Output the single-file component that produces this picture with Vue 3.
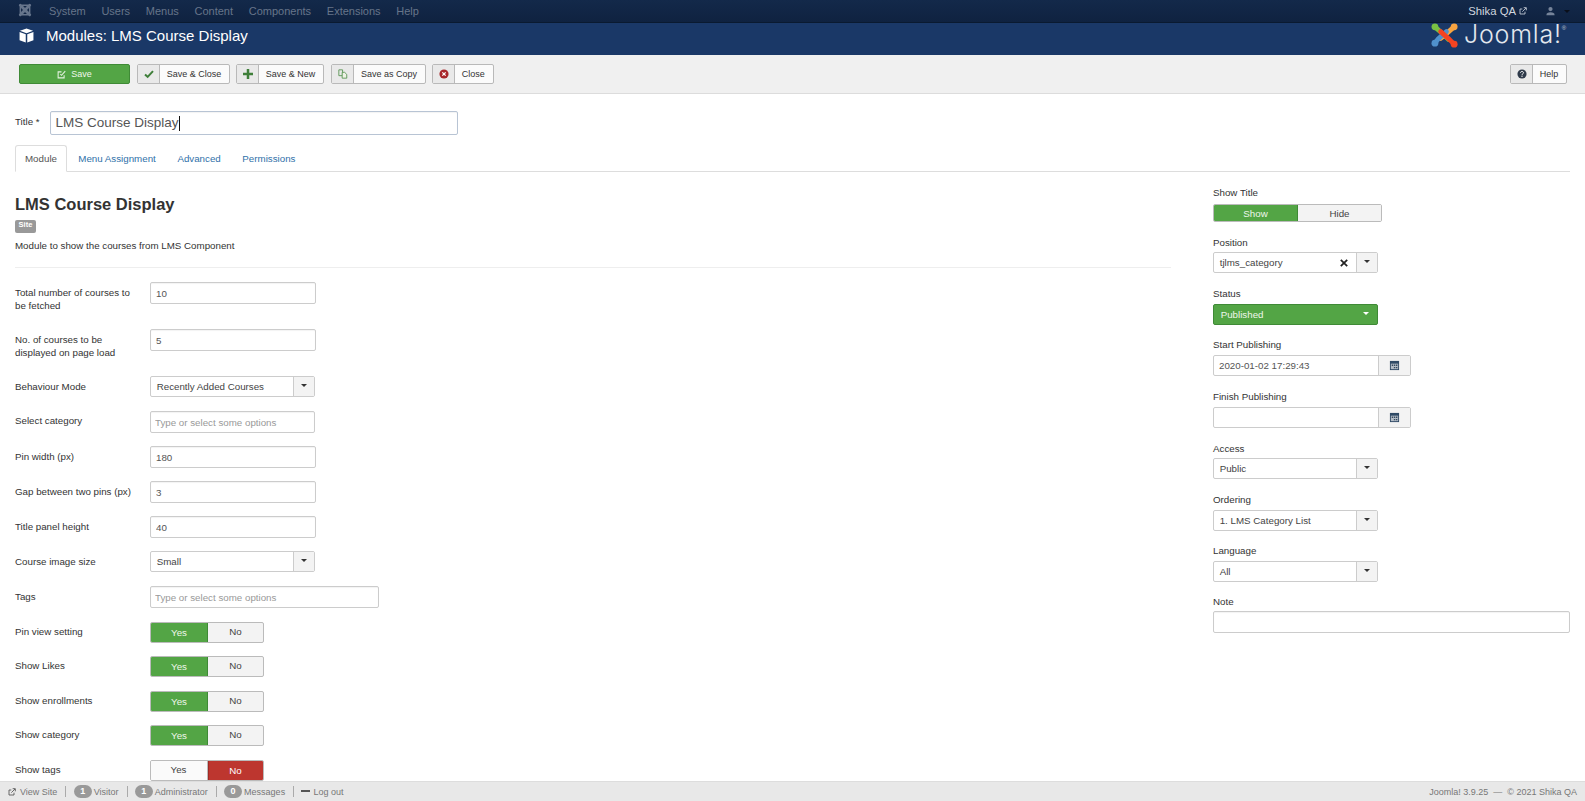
<script setup>
const navItems = ['System', 'Users', 'Menus', 'Content', 'Components', 'Extensions', 'Help']
const tabs = ['Module', 'Menu Assignment', 'Advanced', 'Permissions']
const toggles = [
  { label: 'Pin view setting', on: true },
  { label: 'Show Likes', on: true },
  { label: 'Show enrollments', on: true },
  { label: 'Show category', on: true },
  { label: 'Show tags', on: false }
]
</script>

<template>
  <div class="page">
    <nav class="nav">
      <svg class="nav-logo" viewBox="0 0 24 24" width="14" height="14" fill="none" stroke="#66758c" stroke-width="5" stroke-linecap="round">
        <path d="M4 4 20 20M20 4 4 20" />
        <path d="M7 4h10M7 20h10M4 7v10M20 7v10" stroke-width="2.500" />
      </svg>
      <ul class="nav-menu">
        <li v-for="item in navItems" :key="item">{{ item }}</li>
      </ul>
      <div class="nav-right">
        <span class="nav-site">Shika QA</span>
        <svg class="ext" viewBox="0 0 12 12" width="8" height="8" fill="none" stroke="#c5ccd8" stroke-width="1.300">
          <path d="M9 7v3.500H1.500V3H5M5 7l5.500-5.500M7 1h4v4" />
        </svg>
        <svg class="nav-user" viewBox="0 0 12 12" width="9" height="10" fill="#76849a">
          <circle cx="6" cy="3.400" r="2.800" />
          <path d="M0.500 11.500c0-3 2-4 5.500-4s5.500 1 5.500 4z" />
        </svg>
        <span class="nav-caret"></span>
      </div>
    </nav>

    <header class="head">
      <svg class="cube" viewBox="0 0 16 16" width="15" height="15" fill="#fff">
        <path d="M8 .6 15 3 8 5.500 1 3z" />
        <path d="M.6 4.200 7.200 6.600v8.800L.6 13z" />
        <path d="M15.400 4.200 8.800 6.600v8.800l6.600-2.400z" />
      </svg>
      <h1 class="head-title">Modules: LMS Course Display</h1>
      <div class="brand">
        <svg class="brand-mark" viewBox="0 0 30 26" width="29" height="25" fill="none" stroke-width="5" stroke-linecap="round" stroke-linejoin="round">
          <path d="M5 4 L14 12 L19 17" stroke="#7ac143" />
          <path d="M5 4 h0.100" stroke="#7ac143" stroke-width="7" />
          <path d="M25 4 L17 11 L11 16" stroke="#f9a541" />
          <path d="M25 4 h0.100" stroke="#f9a541" stroke-width="7" />
          <path d="M5 21 L8 17 L17 9" stroke="#5091cd" />
          <path d="M5 21 h0.100" stroke="#5091cd" stroke-width="7" />
          <path d="M25 22 L20 17 L11 9" stroke="#f44321" />
          <path d="M25 22 h0.100" stroke="#f44321" stroke-width="7" />
        </svg>
        <span class="brand-word">Joomla!</span>
        <span class="brand-reg">®</span>
      </div>
    </header>

    <div class="toolbar">
      <button class="tb-save">
        <svg viewBox="0 0 12 12" width="9" height="9" fill="none" stroke="#e6f2e2" stroke-width="1.400">
          <path d="M9.500 7v3.500h-8v-8H6" />
          <path d="M4.500 5.500 6 7l5-5.500" />
        </svg>
        <span>Save</span>
      </button>
      <button class="tb sc">
        <span class="tb-ic">
          <svg viewBox="0 0 12 12" width="10" height="10" fill="none" stroke="#3f7f3a" stroke-width="2.400"><path d="M1.200 6.500 4.400 9.400 10.800 2.600" /></svg>
        </span>
        <span class="tb-tx">Save &amp; Close</span>
      </button>
      <button class="tb sn">
        <span class="tb-ic">
          <svg viewBox="0 0 12 12" width="10" height="10" fill="#3f7f3a"><path d="M4.500 0h3v4.500H12v3H7.500V12h-3V7.500H0v-3h4.500z" /></svg>
        </span>
        <span class="tb-tx">Save &amp; New</span>
      </button>
      <button class="tb sc2">
        <span class="tb-ic">
          <svg viewBox="0 0 12 12" width="10" height="10" fill="none" stroke="#4f8f49" stroke-width="1"><path d="M1 1h4.500v7H1z" /><path d="M5 4h3l2.500 2.500V11H5z" fill="#eef2e6" /></svg>
        </span>
        <span class="tb-tx">Save as Copy</span>
      </button>
      <button class="tb cl">
        <span class="tb-ic">
          <svg viewBox="0 0 12 12" width="10" height="10"><circle cx="6" cy="6" r="5.500" fill="#a8272b" /><path d="M4 4l4 4M8 4l-4 4" stroke="#fff" stroke-width="1.500" /></svg>
        </span>
        <span class="tb-tx">Close</span>
      </button>
      <button class="tb hp">
        <span class="tb-ic">
          <svg viewBox="0 0 12 12" width="10" height="10"><circle cx="6" cy="6" r="5.500" fill="#2f3a4a" /><path d="M4.200 4.600C4.300 3.400 5 3 6 3s1.800.5 1.800 1.500c0 1.300-1.800 1.300-1.800 2.500" fill="none" stroke="#fff" stroke-width="1.200" /><rect x="5.300" y="8" width="1.400" height="1.400" fill="#fff" /></svg>
        </span>
        <span class="tb-tx">Help</span>
      </button>
    </div>

    <main class="main">
      <div class="title-row">
        <label class="title-label">Title *</label>
        <div class="title-input"><span>LMS Course Display</span><i class="cursor"></i></div>
      </div>

      <ul class="tabs">
        <li v-for="(t, i) in tabs" :key="t" :class="['tab', { active: i === 0 }]">{{ t }}</li>
      </ul>

      <div class="cols">
        <section class="left">
          <h2 class="mod-title">LMS Course Display</h2>
          <span class="badge">Site</span>
          <p class="desc">Module to show the courses from LMS Component</p>
          <hr class="rule" />

          <div class="row tall">
            <label>Total number of courses to<br />be fetched</label>
            <input class="in" value="10" />
          </div>
          <div class="row tall">
            <label>No. of courses to be<br />displayed on page load</label>
            <input class="in" value="5" />
          </div>
          <div class="row">
            <label>Behaviour Mode</label>
            <div class="sel w165"><span class="sel-val">Recently Added Courses</span><span class="sel-btn"><b></b></span></div>
          </div>
          <div class="row">
            <label class="up">Select category</label>
            <input class="in w165 ph" placeholder="Type or select some options" />
          </div>
          <div class="row">
            <label>Pin width (px)</label>
            <input class="in" value="180" />
          </div>
          <div class="row">
            <label>Gap between two pins (px)</label>
            <input class="in" value="3" />
          </div>
          <div class="row">
            <label>Title panel height</label>
            <input class="in" value="40" />
          </div>
          <div class="row">
            <label>Course image size</label>
            <div class="sel w165"><span class="sel-val">Small</span><span class="sel-btn"><b></b></span></div>
          </div>
          <div class="row r36">
            <label>Tags</label>
            <input class="in wide ph" placeholder="Type or select some options" />
          </div>
          <div v-for="t in toggles" :key="t.label" class="row rt">
            <label>{{ t.label }}</label>
            <div class="yn">
              <span :class="['yn-a', { green: t.on }]">Yes</span>
              <span :class="['yn-b', { red: !t.on }]">No</span>
            </div>
          </div>
        </section>

        <aside class="right">
          <div class="rg rg50">
            <label>Show Title</label>
            <div class="sh"><span class="sh-a">Show</span><span class="sh-b">Hide</span></div>
          </div>
          <div class="rg">
            <label>Position</label>
            <div class="sel w165">
              <span class="sel-val">tjlms_category</span>
              <svg class="clear" viewBox="0 0 10 10" width="8" height="8" stroke="#222" stroke-width="2.200"><path d="M1 1l8 8M9 1l-8 8" /></svg>
              <span class="sel-btn"><b></b></span>
            </div>
          </div>
          <div class="rg push">
            <label>Status</label>
            <div class="status"><span>Published</span><b></b></div>
          </div>
          <div class="rg rg52 push">
            <label>Start Publishing</label>
            <div class="date">
              <span class="date-val">2020-01-02 17:29:43</span>
              <span class="date-btn">
                <svg viewBox="0 0 12 12" width="11" height="11"><path d="M1 1h10v10H1z" fill="#2f4a66" /><path d="M2 4h8v6H2z" fill="#b3bcc6" /><path d="M3 5h1.500v1.500H3zM5.300 5h1.500v1.500H5.300zM7.600 5h1.500v1.500H7.600zM5.300 7.500h1.500V9H5.300zM7.600 7.500h1.500V9H7.600z" fill="#34495e" /></svg>
              </span>
            </div>
          </div>
          <div class="rg rg52 push">
            <label>Finish Publishing</label>
            <div class="date">
              <span class="date-val"></span>
              <span class="date-btn">
                <svg viewBox="0 0 12 12" width="11" height="11"><path d="M1 1h10v10H1z" fill="#2f4a66" /><path d="M2 4h8v6H2z" fill="#b3bcc6" /><path d="M3 5h1.500v1.500H3zM5.300 5h1.500v1.500H5.300zM7.600 5h1.500v1.500H7.600zM5.300 7.500h1.500V9H5.300zM7.600 7.500h1.500V9H7.600z" fill="#34495e" /></svg>
              </span>
            </div>
          </div>
          <div class="rg">
            <label>Access</label>
            <div class="sel w165"><span class="sel-val">Public</span><span class="sel-btn"><b></b></span></div>
          </div>
          <div class="rg push">
            <label>Ordering</label>
            <div class="sel w165"><span class="sel-val">1. LMS Category List</span><span class="sel-btn"><b></b></span></div>
          </div>
          <div class="rg push">
            <label>Language</label>
            <div class="sel w165"><span class="sel-val">All</span><span class="sel-btn"><b></b></span></div>
          </div>
          <div class="rg">
            <label>Note</label>
            <input class="in full" />
          </div>
        </aside>
      </div>
    </main>

    <footer class="foot">
      <div class="foot-left">
        <span class="fi first">
          <svg viewBox="0 0 12 12" width="8" height="8" fill="none" stroke="#555" stroke-width="1.300"><path d="M9 7v3.500H1.500V3H5M5 7l5.500-5.500M7 1h4v4" /></svg>
          View Site
        </span>
        <span class="fi"><em>1</em>Visitor</span>
        <span class="fi"><em>1</em>Administrator</span>
        <span class="fi"><em>0</em>Messages</span>
        <span class="fi last"><i class="minus"></i>Log out</span>
      </div>
      <div class="foot-right">Joomla! 3.9.25 &nbsp;—&nbsp; © 2021 Shika QA</div>
    </footer>
  </div>
</template>

<style>
html, body { margin: 0; padding: 0; overflow: hidden; background: #fff; }
</style>

<style scoped>
* { box-sizing: border-box; }
.page {
  height: 801px;
  display: flex;
  flex-direction: column;
  overflow: hidden;
  font-family: "Liberation Sans", Arial, sans-serif;
  font-size: 9.750px;
  color: #333;
}

/* top nav */
.nav {
  flex: 0 0 23px;
  display: flex;
  align-items: center;
  padding-left: 18px;
  background: linear-gradient(#13294a, #0f2240);
  border-bottom: 1px solid #0a1a30;
  font-size: 11px;
  color: #67758a;
}
.nav-logo { margin-top: -2px; }
.nav-menu {
  display: flex;
  gap: 15.700px;
  list-style: none;
  margin: 0 0 0 17px;
  padding: 0;
}
.nav-right {
  margin-left: auto;
  display: flex;
  align-items: center;
  padding-right: 15px;
  color: #d0d6df;
}
.nav-site { font-size: 11.300px; }
.ext { margin-left: 3px; }
.nav-user { margin-left: 19px; }
.nav-caret {
  margin-left: 9px;
  width: 0;
  height: 0;
  border: 3px solid transparent;
  border-top-color: #0a0f1a;
  border-bottom: 0;
}

/* subhead */
.head {
  flex: 0 0 32px;
  display: flex;
  align-items: center;
  padding-left: 19px;
  background: #1a3867;
  position: relative;
}
.cube { margin-top: -7px; }
.head-title {
  margin: -6px 0 0 12px;
  font-size: 15px;
  font-weight: 400;
  color: #fff;
  line-height: 20px;
}
.brand {
  position: absolute;
  left: 1430px;
  top: 0;
  height: 25px;
  display: flex;
  align-items: center;
}
.brand-word {
  font-family: Inter, "Liberation Sans", sans-serif;
  font-weight: 300;
  font-size: 25px;
  line-height: 25px;
  color: #e4e8ee;
  margin: -2px 0 0 5px;
  letter-spacing: 0.800px;
}
.brand-reg {
  font-size: 6px;
  color: #c6cdd8;
  align-self: flex-start;
  margin-top: 2px;
}

/* toolbar */
.toolbar {
  flex: 0 0 39px;
  display: flex;
  align-items: flex-start;
  padding: 9px 18.300px 0 19px;
  background: #f0f0f0;
  border-bottom: 1px solid #dcdcdc;
}
button { font: inherit; padding: 0; }
.tb-save {
  width: 111px;
  height: 20px;
  display: flex;
  align-items: center;
  justify-content: center;
  gap: 5px;
  color: #eef6ea;
  background: #53a545;
  border: 1px solid #3f8a36;
  border-radius: 2px;
  font-size: 9px;
}
.tb {
  height: 20px;
  display: flex;
  align-items: stretch;
  background: #fbfbfb;
  border: 1px solid #b9b9b9;
  border-radius: 2px;
  color: #333;
  font-size: 9px;
  margin-left: 7px;
}
.tb-ic {
  flex: 0 0 22px;
  display: flex;
  align-items: center;
  justify-content: center;
  background: #e9e9e9;
  border-right: 1px solid #b9b9b9;
}
.tb-tx { flex: 1; text-align: center; line-height: 18px; padding-right: 1px; }
.sc { width: 93px; }
.sn { width: 88px; margin-left: 6px; }
.sc2 { width: 95px; }
.cl { width: 61.500px; margin-left: 6px; }
.hp { width: 56.500px; margin-left: auto; }

/* main */
.main { flex: 1; min-height: 0; padding: 0 15px; overflow: hidden; }
.title-row { display: flex; align-items: center; margin-top: 17px; height: 24px; }
.title-label { width: 35px; margin-top: -3px; }
.title-input {
  width: 408px;
  height: 24px;
  border: 1px solid #b8c4d4;
  border-radius: 2px;
  padding-left: 4.500px;
  font-size: 13.500px;
  line-height: 22px;
  color: #555;
  display: flex;
  align-items: center;
  box-shadow: inset 0 1px 1px rgba(0,0,0,.05);
}
.title-input span { margin-top: -1px; }
.cursor { display: block; width: 1px; height: 15px; background: #111; }
.tabs {
  display: flex;
  list-style: none;
  margin: 9.500px 0 0;
  padding: 0;
  height: 27px;
  border-bottom: 1px solid #ddd;
}
.tab { padding: 0 10px; line-height: 28px; margin-right: 1.600px; color: #3071a9; }
.tab.active {
  height: 27px;
  line-height: 26px;
  color: #555;
  background: #fff;
  border: 1px solid #ddd;
  border-bottom-color: #fff;
  border-radius: 3px 3px 0 0;
  padding: 0 9px;
  margin-right: 1.300px;
}
.cols { display: flex; }
.left { flex: 0 0 1156px; }
.right { margin-left: 42px; flex: 1; padding-top: 14px; }

.mod-title {
  margin: 22px 0 0;
  font-size: 16.500px;
  line-height: 20px;
  color: #333;
  font-weight: 700;
}
.badge {
  display: block;
  width: 21px;
  height: 13px;
  margin-top: 6px;
  background: #999;
  color: #fff;
  border-radius: 2px;
  font-size: 7.500px;
  font-weight: 700;
  text-align: center;
  line-height: 9px;
}
.desc { margin: 6px 0 0; line-height: 13px; }
.rule { margin: 15.500px 0 0; border: 0; border-top: 1px solid #eee; height: 1px; }

.row { display: flex; height: 35px; }
.row label { flex: 0 0 135px; line-height: 13px; padding-top: 4px; }
.row label.up { padding-top: 3px; }
.rule + .row { margin-top: 14px; }
.tall { height: 47px; }
.r36 { height: 36px; }
.rt { height: 34.400px; }
.rt label { padding-top: 3px; }

.in {
  width: 166px;
  height: 22px;
  border: 1px solid #ccc;
  border-radius: 2px;
  padding: 0 5px;
  font: inherit;
  color: #555;
  outline: 0;
  box-shadow: inset 0 1px 1px rgba(0,0,0,.05);
}
.in::placeholder { color: #999; opacity: 1; }
.w165 { width: 165px; }
.wide { width: 229px; }
.full { width: 100%; height: 21.500px; }
.ph { padding-left: 4px; }

.sel {
  height: 21px;
  display: flex;
  align-items: center;
  background: #fff;
  border: 1px solid #ccc;
  border-radius: 2px;
  color: #444;
}
.sel-val { flex: 1; padding-left: 5.700px; }
.sel-btn {
  flex: 0 0 21px;
  align-self: stretch;
  display: flex;
  align-items: center;
  justify-content: center;
  background: #f3f3f3;
  border-left: 1px solid #ccc;
}
.sel-btn b {
  width: 0;
  height: 0;
  border: 3px solid transparent;
  border-top-color: #333;
  border-bottom: 0;
  margin-top: -2px;
}
.clear { margin-right: 8px; }

.yn {
  width: 114px;
  height: 21px;
  display: flex;
  border: 1px solid #bbb;
  border-radius: 2px;
  overflow: hidden;
  background: #f3f3f3;
  text-align: center;
  line-height: 20px;
}
.yn-a { width: 58px; margin: -1px 0 -1px -1px; color: #444; background: #fafafa; border-right: 1px solid #bbb; }
.yn-b { flex: 1; margin: -1px -1px -1px 0; color: #444; padding-right: 1px; }
.yn-a.green { color: #eef6ea; background: #53a545; border: 1px solid #3f8a36; }
.yn-b.red { color: #fff; background: #bd362f; border: 1px solid #a02a25; }

.rg { height: 51px; }
.rg50 { height: 50.500px; }
.rg52 { height: 52px; }
.rg label { display: block; line-height: 13px; margin-bottom: 3px; }
.rg.push label { margin-bottom: 4px; }
.sh {
  width: 169px;
  height: 18px;
  margin-top: 5px;
  display: flex;
  border: 1px solid #bbb;
  border-radius: 2px;
  overflow: hidden;
  line-height: 17px;
  text-align: center;
}
.sh-a { width: 85px; margin: -1px 0 -1px -1px; color: #eef6ea; background: #53a545; border: 1px solid #3f8a36; }
.sh-b { flex: 1; color: #444; background: #f3f3f3; }
.status {
  width: 165px;
  height: 21px;
  padding: 0 7px 0 6.700px;
  display: flex;
  align-items: center;
  justify-content: space-between;
  color: #eef6ea;
  background: #53a545;
  border: 1px solid #3f8a36;
  border-radius: 2px;
}
.status b {
  width: 0;
  height: 0;
  border: 3px solid transparent;
  border-top-color: #fff;
  border-bottom: 0;
  margin: -3px 1px 0 0;
}
.date {
  width: 198px;
  height: 21px;
  display: flex;
  border: 1px solid #ccc;
  border-radius: 2px;
}
.date-val { flex: 1; padding-left: 5px; line-height: 19px; color: #555; }
.date-btn {
  flex: 0 0 32px;
  display: flex;
  align-items: center;
  justify-content: center;
  background: #f3f3f3;
  border-left: 1px solid #ccc;
}

/* footer */
.foot {
  flex: 0 0 20px;
  display: flex;
  align-items: center;
  justify-content: space-between;
  background: #e8e8e8;
  border-top: 1px solid #ddd;
  color: #777;
  padding: 0 8px;
  font-size: 9px;
}
.foot-left { display: flex; align-items: center; }
.fi {
  display: flex;
  align-items: center;
  gap: 2px;
  height: 11px;
  padding-right: 8px;
  margin-right: 7.300px;
  border-right: 1px solid #aaa;
}
.fi.first { gap: 4px; }
.fi.last { border: 0; gap: 3px; }
.fi em {
  width: 18px;
  height: 13px;
  border-radius: 7px;
  background: #999;
  color: #fff;
  font-style: normal;
  font-weight: 700;
  text-align: center;
  line-height: 13px;
}
.minus { width: 9px; height: 2px; background: #555; margin-top: -2px; }
</style>
